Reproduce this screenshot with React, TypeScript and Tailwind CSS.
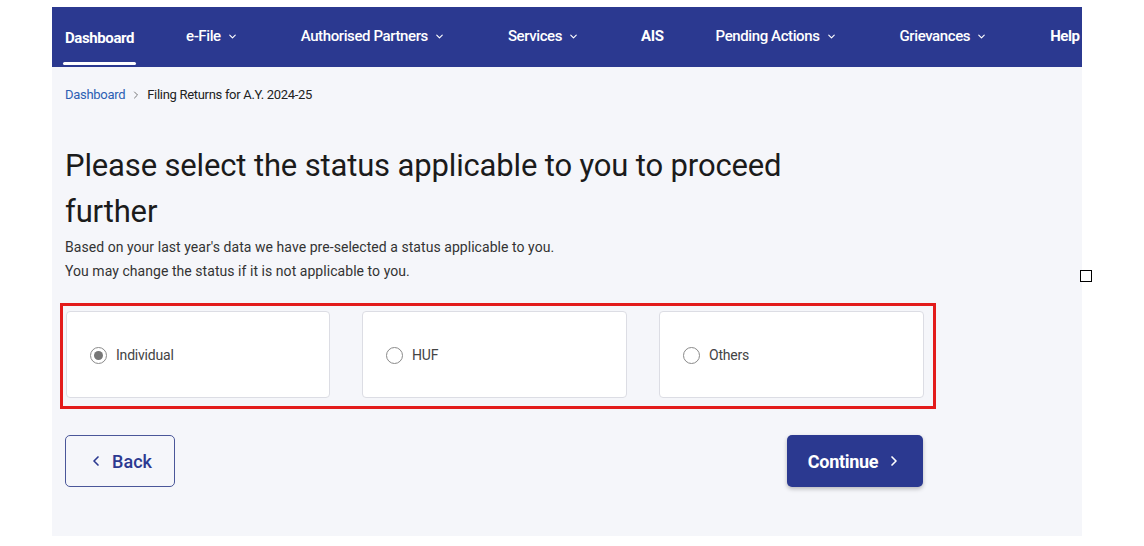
import { ChevronDown, ChevronLeft, ChevronRight } from "lucide-react";

const options = [
  { label: "Individual", checked: true },
  { label: "HUF", checked: false },
  { label: "Others", checked: false },
];

function Radio({ checked }: { checked: boolean }) {
  return (
    <span className="w-[17px] h-[17px] rounded-full border-[1.5px] border-[#8a8a8a] flex items-center justify-center bg-white">
      {checked && <span className="w-[9px] h-[9px] rounded-full bg-[#777]" />}
    </span>
  );
}

function Caret() {
  return <ChevronDown className="w-[11px] h-[11px]" strokeWidth={2.5} />;
}

export default function App() {
  return (
    <div
      className="relative w-full h-[546px] bg-white overflow-hidden"
      style={{ fontFamily: "Roboto, 'Noto Sans', sans-serif" }}
    >
      <div className="ml-[52px] mt-[7px] w-[1030px] h-[529px] bg-[#f5f6fa] overflow-hidden">
        {/* Top navigation */}
        <nav className="h-[60px] bg-[#2b3990] flex items-stretch text-white text-[15px] font-medium tracking-[-0.4px] whitespace-nowrap">
          <div className="ml-[13px] flex flex-col justify-center relative">
            <span className="font-bold pt-[3px]">Dashboard</span>
            <span className="absolute left-[-2px] right-[-2px] bottom-[2px] h-[3px] bg-white rounded-sm" />
          </div>
          <div className="ml-[52px] flex items-center gap-[6px] pb-[2px]">
            e-File <Caret />
          </div>
          <div className="ml-[63px] flex items-center gap-[6px] pb-[2px]">
            Authorised Partners <Caret />
          </div>
          <div className="ml-[63px] flex items-center gap-[6px] pb-[2px]">
            Services <Caret />
          </div>
          <div className="ml-[62px] flex items-center pb-[2px] font-bold">AIS</div>
          <div className="ml-[52px] flex items-center gap-[6px] pb-[2px]">
            Pending Actions <Caret />
          </div>
          <div className="ml-[63px] flex items-center gap-[6px] pb-[2px]">
            Grievances <Caret />
          </div>
          <div className="ml-[63px] flex items-center pb-[2px] font-bold">Help</div>
        </nav>

        <div className="pl-[13px]">
          {/* Breadcrumb */}
          <div className="mt-[19px] flex items-center text-[13px] tracking-[-0.3px] h-[18px]">
            <span className="text-[#2c5fb3]">Dashboard</span>
            <ChevronRight className="w-3 h-3 mx-[5px] text-[#777]" strokeWidth={2} />
            <span className="text-[#222]">Filing Returns for A.Y. 2024-25</span>
          </div>

          {/* Heading */}
          <h1 className="mt-[39px] w-[760px] text-[31px] leading-[46px] text-[#1b1b1b] tracking-[-0.15px]">
            Please select the status applicable to you to proceed further
          </h1>
          <p className="text-[14px] leading-[24px] text-[#333] tracking-[0.05px]">
            Based on your last year's data we have pre-selected a status applicable to you.
            <br />
            You may change the status if it is not applicable to you.
          </p>

          {/* Status options (highlighted) */}
          <div className="mt-[20px] ml-[-5px] w-[876px] border-[3px] border-[#e31b1b] pl-[3px] pr-[9px] pt-[5px] pb-[8px] flex gap-[32px]">
            {options.map((o, i) => (
              <label
                key={o.label}
                className={`${i === 0 ? "w-[264px]" : "w-[265px]"} h-[87px] bg-white border border-[#dcdde4] rounded-[4px] flex items-center gap-[9px] pl-[23px] pt-[2px]`}
              >
                <Radio checked={o.checked} />
                <span className="text-[14px] text-[#444] tracking-[-0.2px]">{o.label}</span>
              </label>
            ))}
          </div>

          {/* Actions */}
          <div className="mt-[26px] w-[858px] flex justify-between">
            <button className="w-[110px] h-[52px] border-[1.5px] border-[#4a5699] rounded-[5px] flex items-center justify-center gap-[8px] text-[#2b3990] text-[18px] font-medium">
              <ChevronLeft className="w-4 h-4" strokeWidth={2.5} />
              Back
            </button>
            <button className="w-[136px] h-[52px] bg-[#2b3990] rounded-[5px] shadow-[0_2px_4px_rgba(0,0,0,0.25)] flex items-center justify-center gap-[8px] text-white text-[18px] font-bold tracking-[-0.3px]">
              Continue
              <ChevronRight className="w-4 h-4" strokeWidth={2.5} />
            </button>
          </div>
        </div>
      </div>

      {/* Stray checkbox marker over the panel edge */}
      <div className="absolute left-[1080px] top-[270px] w-[12px] h-[12px] border-[1.5px] border-black bg-white" />
    </div>
  );
}
